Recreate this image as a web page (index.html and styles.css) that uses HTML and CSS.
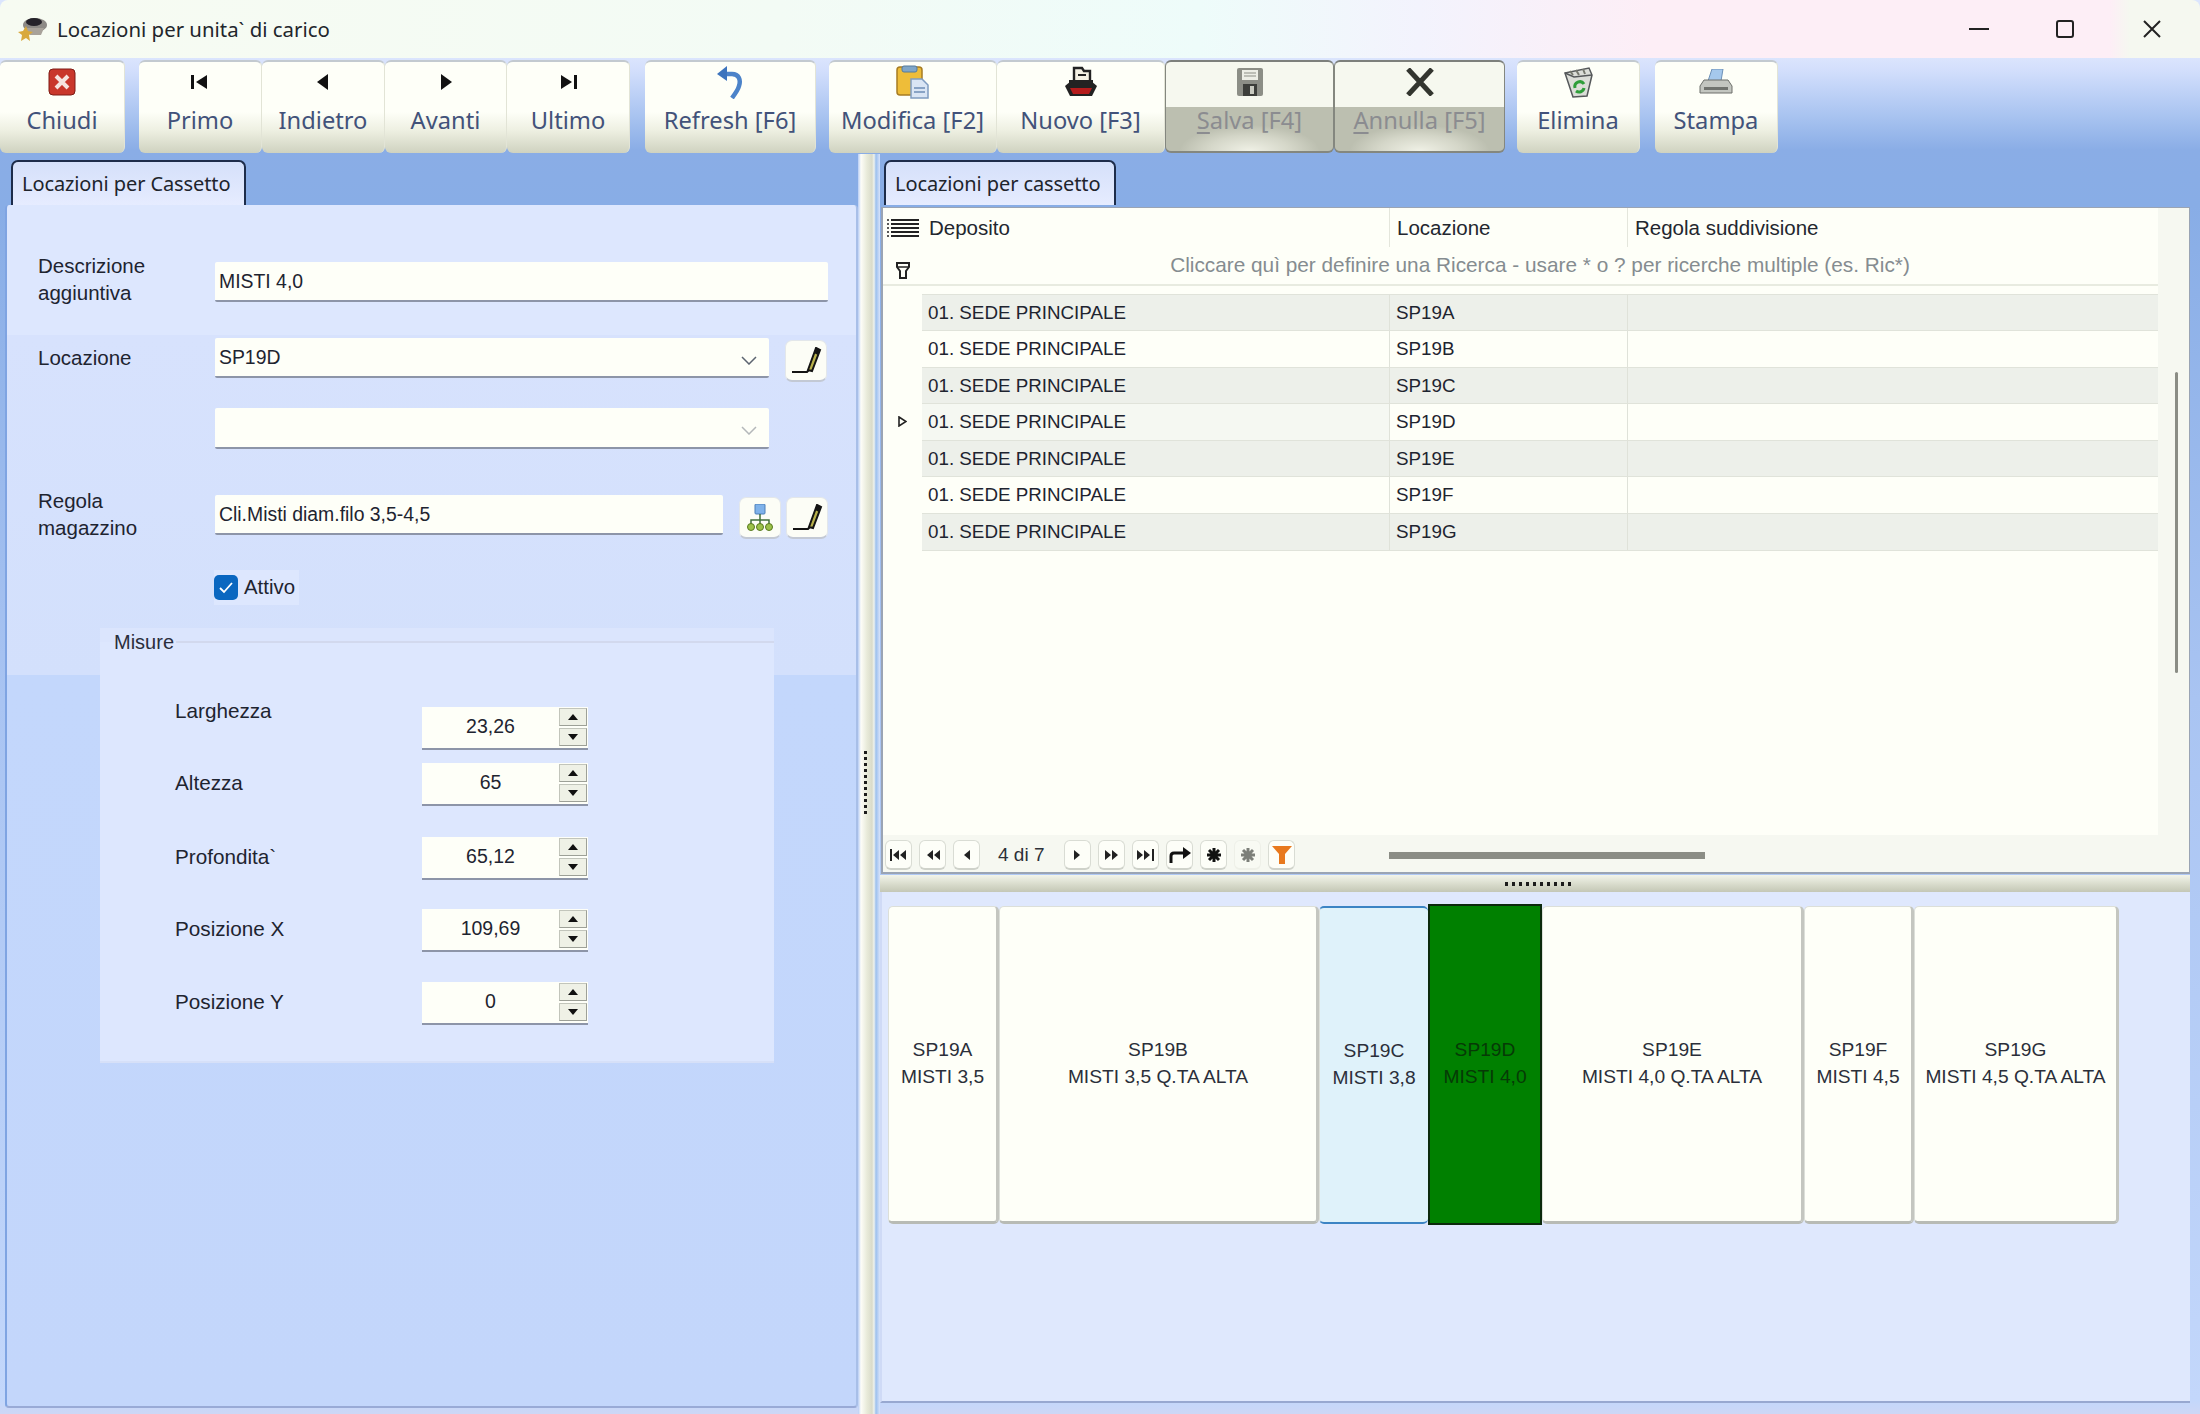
FILE: index.html
```html
<!DOCTYPE html>
<html lang="it">
<head>
  <meta charset="utf-8">
  <title>Locazioni per unita` di carico</title>
  <link rel="stylesheet" href="styles.css">
</head>
<body>
<div class="window">
  <!-- titlebar -->
  <div class="titlebar">
    <svg class="app-icon" viewBox="0 0 30 26">
      <ellipse cx="17" cy="9" rx="12" ry="7" fill="#8d8a86"/>
      <ellipse cx="16" cy="6" rx="8" ry="4" fill="#25222a"/>
      <path d="M8 12h18l-3 7H12z" fill="#a8a29a"/>
      <path d="M8 10l2 5 5 1-4 3 1 6-4-3-5 3 1-6-4-3 5-1z" fill="#d9a93c"/>
    </svg>
    <span class="app-title">Locazioni per unita` di carico</span>
    <div class="winbtns">
      <svg class="winbtn-min" viewBox="0 0 20 2"><rect width="20" height="2" fill="#222"/></svg>
      <svg class="winbtn-max" viewBox="0 0 18 18"><rect x="1" y="1" width="16" height="16" rx="2" fill="none" stroke="#222" stroke-width="2"/></svg>
      <svg class="winbtn-close" viewBox="0 0 18 18"><path d="M1 1l16 16M17 1L1 17" stroke="#222" stroke-width="2"/></svg>
    </div>
  </div>

  <!-- toolbar -->
  <div class="toolbar">
    <div class="tb-group g1">
      <button class="tb-btn w125"><span class="tb-icon">
        <svg width="28" height="28" viewBox="0 0 28 28"><rect x="1" y="1" width="26" height="26" rx="4" fill="#c9372b" stroke="#7e1d16"/><path d="M8 8l12 12M20 8L8 20" stroke="#f6e4df" stroke-width="4"/></svg>
      </span><span>Chiudi</span></button>
    </div>
    <div class="tb-group g2">
      <button class="tb-btn w123"><span class="tb-icon"><svg width="20" height="14" viewBox="0 0 20 14"><rect x="1" y="0" width="3" height="14" fill="#111"/><path d="M17 0v14L6 7z" fill="#111"/></svg></span><span>Primo</span></button>
      <button class="tb-btn w123"><span class="tb-icon"><svg width="14" height="16" viewBox="0 0 14 16"><path d="M12 0v16L1 8z" fill="#111"/></svg></span><span>Indietro</span></button>
      <button class="tb-btn w122"><span class="tb-icon"><svg width="14" height="16" viewBox="0 0 14 16"><path d="M2 0v16l11-8z" fill="#111"/></svg></span><span>Avanti</span></button>
      <button class="tb-btn w123"><span class="tb-icon"><svg width="20" height="14" viewBox="0 0 20 14"><rect x="16" y="0" width="3" height="14" fill="#111"/><path d="M3 0v14l11-7z" fill="#111"/></svg></span><span>Ultimo</span></button>
    </div>
    <div class="tb-group g3">
      <button class="tb-btn w171"><span class="tb-icon">
        <svg width="30" height="34" viewBox="0 0 30 34"><path d="M8 9h9c7 0 9 6 7 12-1 4-4 8-7 12" fill="none" stroke="#4c83c9" stroke-width="4.5"/><path d="M12 1L2 9l10 7z" fill="#3d74bd"/></svg>
      </span><span>Refresh [F6]</span></button>
    </div>
    <div class="tb-group g4">
      <button class="tb-btn w168"><span class="tb-icon">
        <svg width="34" height="34" viewBox="0 0 34 34"><rect x="1" y="2" width="25" height="28" rx="3" fill="#eebd39" stroke="#a77c22" stroke-width="1.5"/><rect x="6" y="1" width="15" height="6" rx="2" fill="#7fa6c8" stroke="#557a9c"/><path d="M15 14h11l6 6v13H15z" fill="#d9e5f4" stroke="#7f9cc0" stroke-width="1.5"/><path d="M18 23h11M18 27h11" stroke="#6d8db5" stroke-width="1.5"/></svg>
      </span><span>Modifica [F2]</span></button>
      <button class="tb-btn w168"><span class="tb-icon">
        <svg width="34" height="32" viewBox="0 0 34 32"><path d="M10 2h8l2 3h6v15H10z" fill="#f4f1e4" stroke="#222" stroke-width="2.4"/><path d="M14 9h8" stroke="#222" stroke-width="2"/><path d="M6 15h22v5H6z" fill="#fff" stroke="#222" stroke-width="2"/><path d="M1 20l6-5h20l6 5-5 10H6z" fill="#222"/><path d="M6 22h22l-3 6H9z" fill="#b51c1c"/></svg>
      </span><span>Nuovo [F3]</span></button>
      <button class="tb-btn w169 off"><span class="tb-icon">
        <svg width="26" height="28" viewBox="0 0 26 28"><rect x="0" y="0" width="26" height="28" rx="2" fill="#8c8e86"/><rect x="5" y="2" width="16" height="10" fill="#eceee6"/><path d="M7 5h12M7 8h12" stroke="#8c8e86"/><rect x="6" y="16" width="14" height="12" fill="#3c3e3a"/><rect x="13" y="18" width="4" height="8" fill="#c8cac0"/></svg>
      </span><span><u>S</u>alva [F4]</span></button>
      <button class="tb-btn w171 off"><span class="tb-icon">
        <svg width="30" height="28" viewBox="0 0 30 28"><path d="M3 1l24 26M27 1L3 27" stroke="#33352f" stroke-width="5"/></svg>
      </span><span><u>A</u>nnulla [F5]</span></button>
    </div>
    <div class="tb-group g5">
      <button class="tb-btn w123"><span class="tb-icon">
        <svg width="32" height="32" viewBox="0 0 32 32"><path d="M3 7l24-5 3 7-5 21-14 1z" fill="#dcded8" stroke="#55585a" stroke-width="1.5"/><path d="M3 7l9 4 18-2" fill="none" stroke="#55585a" stroke-width="1.5"/><path d="M8 5l3 4M14 4l3 5M21 3l2 5" stroke="#77796f" stroke-width="2"/><path d="M13 22a5 5 0 0 1 9-4M22 22a5 5 0 0 1-8 3" fill="none" stroke="#2f9e3a" stroke-width="3"/></svg>
      </span><span>Elimina</span></button>
    </div>
    <div class="tb-group">
      <button class="tb-btn w123"><span class="tb-icon">
        <svg width="34" height="26" viewBox="0 0 34 26"><path d="M13 0h11l-2 12H9z" fill="#a5c8ec" stroke="#6d90b8"/><path d="M5 11h24l4 6v7H1v-7z" fill="#c3c6c0" stroke="#6c6f6a"/><rect x="5" y="18" width="24" height="3" fill="#70736e"/></svg>
      </span><span>Stampa</span></button>
    </div>
  </div>

  <div class="main">
    <!-- left side -->
    <div class="col-left">
      <div class="tab tab-left">Locazioni per Cassetto</div>
      <div class="panel-left">
        <div class="frow r1">
          <label class="flabel">Descrizione<br>aggiuntiva</label>
          <div class="input w613 mt10">MISTI 4,0</div>
        </div>
        <div class="frow r2">
          <label class="flabel mt6">Locazione</label>
          <div class="input combo">SP19D
            <svg class="chev" viewBox="0 0 16 9"><path d="M1 1l7 7 7-7" fill="none" stroke="#5c6470" stroke-width="1.5"/></svg>
          </div>
          <button class="sq-btn mt2 ml16"><svg width="32" height="28" viewBox="0 0 32 28"><path d="M26 1l4 2-8 21-4-1z" fill="#b7b04a" stroke="#141414" stroke-width="2"/><path d="M26 1l4 2-2 5-4-2z" fill="#141414"/><path d="M2 25h15l2-2" fill="none" stroke="#141414" stroke-width="2"/></svg></button>
        </div>
        <div class="frow r3">
          <div class="flabel"></div>
          <div class="input combo">
            <svg class="chev light" viewBox="0 0 16 9"><path d="M1 1l7 7 7-7" fill="none" stroke="#b4b8ba" stroke-width="1.5"/></svg>
          </div>
        </div>
        <div class="frow r4">
          <label class="flabel">Regola<br>magazzino</label>
          <div class="input w508 mt8">Cli.Misti diam.filo 3,5-4,5</div>
          <button class="sq-btn mt10 ml16"><svg width="28" height="28" viewBox="0 0 28 28"><rect x="9" y="0" width="10" height="10" rx="1" fill="#7fb2ea" stroke="#4d7fb8"/><path d="M14 10v6M5 20v-4h18v4M14 16v4" fill="none" stroke="#3f6f3a" stroke-width="1.5"/><circle cx="5" cy="23" r="3.5" fill="#9cc24a" stroke="#56781e"/><circle cx="14" cy="23" r="3.5" fill="#9cc24a" stroke="#56781e"/><circle cx="23" cy="23" r="3.5" fill="#9cc24a" stroke="#56781e"/></svg></button>
          <button class="sq-btn mt10 ml5"><svg width="32" height="28" viewBox="0 0 32 28"><path d="M26 1l4 2-8 21-4-1z" fill="#b7b04a" stroke="#141414" stroke-width="2"/><path d="M26 1l4 2-2 5-4-2z" fill="#141414"/><path d="M2 25h15l2-2" fill="none" stroke="#141414" stroke-width="2"/></svg></button>
        </div>
        <div class="check-row">
          <span class="checkbox"><svg width="16" height="14" viewBox="0 0 16 14"><path d="M2 7l4 4 8-9" fill="none" stroke="#fff" stroke-width="1.8"/></svg></span>
          <span>Attivo</span>
        </div>
        <div class="group">
          <div class="group-head"><span>Misure</span></div>
          <div class="mrow first">
            <label class="mlabel">Larghezza</label>
            <div class="spin"><span class="spin-val">23,26</span><span class="spin-btns"><i class="up"></i><i class="dn"></i></span></div>
          </div>
          <div class="mrow gap13">
            <label class="mlabel">Altezza</label>
            <div class="spin"><span class="spin-val">65</span><span class="spin-btns"><i class="up"></i><i class="dn"></i></span></div>
          </div>
          <div class="mrow gap31">
            <label class="mlabel">Profondita`</label>
            <div class="spin"><span class="spin-val">65,12</span><span class="spin-btns"><i class="up"></i><i class="dn"></i></span></div>
          </div>
          <div class="mrow gap29">
            <label class="mlabel">Posizione X</label>
            <div class="spin"><span class="spin-val">109,69</span><span class="spin-btns"><i class="up"></i><i class="dn"></i></span></div>
          </div>
          <div class="mrow gap30">
            <label class="mlabel">Posizione Y</label>
            <div class="spin"><span class="spin-val">0</span><span class="spin-btns"><i class="up"></i><i class="dn"></i></span></div>
          </div>
        </div>
      </div>
    </div>

    <div class="vsplit"><span class="vdots"></span></div>

    <!-- right side -->
    <div class="col-right">
      <div class="tab tab-right">Locazioni per cassetto</div>
      <div class="grid">
        <div class="g-top">
          <div class="g-left">
            <div class="g-row g-head">
              <div class="g-gut"><svg width="32" height="18" viewBox="0 0 32 18"><path d="M0 1h2M0 5h2M0 9h2M0 13h2M0 17h2" stroke="#222" stroke-width="1.5"/><path d="M4 1h28M4 5h28M4 9h28M4 13h28M4 17h28" stroke="#222" stroke-width="2"/></svg></div>
              <div class="g-th">Deposito</div>
              <div class="g-th">Locazione</div>
              <div class="g-th">Regola suddivisione</div>
            </div>
            <div class="g-filter">
              <div class="g-gut"><svg width="14" height="17" viewBox="0 0 14 17"><path d="M1 1h12v4l-3 4v7H4V9L1 5z" fill="none" stroke="#222" stroke-width="2"/><path d="M1 5h12" stroke="#222" stroke-width="1.5"/></svg></div>
              <div class="g-hint">Cliccare quì per definire una Ricerca - usare * o ? per ricerche multiple (es. Ric*)</div>
            </div>
            <div class="g-rows">
              <div class="g-row row odd"><div class="g-gut"></div><div class="g-td">01. SEDE PRINCIPALE</div><div class="g-td">SP19A</div><div class="g-td"></div></div>
              <div class="g-row row"><div class="g-gut"></div><div class="g-td">01. SEDE PRINCIPALE</div><div class="g-td">SP19B</div><div class="g-td"></div></div>
              <div class="g-row row odd"><div class="g-gut"></div><div class="g-td">01. SEDE PRINCIPALE</div><div class="g-td">SP19C</div><div class="g-td"></div></div>
              <div class="g-row row cur"><div class="g-gut"><svg width="9" height="11" viewBox="0 0 9 11"><path d="M1 1l7 4.5L1 10z" fill="none" stroke="#222" stroke-width="1.6"/></svg></div><div class="g-td">01. SEDE PRINCIPALE</div><div class="g-td">SP19D</div><div class="g-td"></div></div>
              <div class="g-row row odd"><div class="g-gut"></div><div class="g-td">01. SEDE PRINCIPALE</div><div class="g-td">SP19E</div><div class="g-td"></div></div>
              <div class="g-row row"><div class="g-gut"></div><div class="g-td">01. SEDE PRINCIPALE</div><div class="g-td">SP19F</div><div class="g-td"></div></div>
              <div class="g-row row odd"><div class="g-gut"></div><div class="g-td">01. SEDE PRINCIPALE</div><div class="g-td">SP19G</div><div class="g-td"></div></div>
            </div>
          </div>
          <div class="g-strip"><div class="vthumb"></div></div>
        </div>
        <div class="g-nav">
          <button class="nav-btn"><svg width="18" height="12" viewBox="0 0 18 12"><rect x="0" y="0" width="2" height="12" fill="#222"/><path d="M9 1v10L3 6zM16 1v10L10 6z" fill="#222"/></svg></button>
          <button class="nav-btn"><svg width="14" height="12" viewBox="0 0 14 12"><path d="M7 1v10L1 6zM14 1v10L8 6z" fill="#222"/></svg></button>
          <button class="nav-btn"><svg width="7" height="12" viewBox="0 0 7 12"><path d="M7 1v10L1 6z" fill="#222"/></svg></button>
          <span class="nav-text">4 di 7</span>
          <button class="nav-btn"><svg width="7" height="12" viewBox="0 0 7 12"><path d="M0 1v10l6-5z" fill="#222"/></svg></button>
          <button class="nav-btn"><svg width="14" height="12" viewBox="0 0 14 12"><path d="M0 1v10l6-5zM7 1v10l6-5z" fill="#222"/></svg></button>
          <button class="nav-btn"><svg width="18" height="12" viewBox="0 0 18 12"><path d="M0 1v10l6-5zM7 1v10l6-5z" fill="#222"/><rect x="15" y="0" width="2" height="12" fill="#222"/></svg></button>
          <button class="nav-btn"><svg width="22" height="16" viewBox="0 0 22 16"><path d="M2 16V9c0-2 1-3 3-3h10" fill="none" stroke="#111" stroke-width="3"/><path d="M14 0l8 6-8 6z" fill="#111"/></svg></button>
          <button class="nav-btn"><svg width="16" height="16" viewBox="0 0 16 16"><path d="M8 1v14M1 8h14M3 3l10 10M13 3L3 13" stroke="#111" stroke-width="3"/></svg></button>
          <button class="nav-btn off"><svg width="16" height="16" viewBox="0 0 16 16"><path d="M8 1v14M1 8h14M3 3l10 10M13 3L3 13" stroke="#7c7f79" stroke-width="3"/></svg></button>
          <button class="nav-btn"><svg width="20" height="18" viewBox="0 0 20 18"><path d="M0 0h20l-7 8v10H7V8z" fill="#e8791e"/></svg></button>
          <div class="hthumb"></div>
        </div>
      </div>
      <div class="hsplit"><span class="hdots"></span></div>
      <div class="panel-cells">
        <div class="cell" style="width:111px">SP19A<br>MISTI 3,5</div>
        <div class="cell" style="width:320px">SP19B<br>MISTI 3,5 Q.TA ALTA</div>
        <div class="cell cell-prev" style="width:109px">SP19C<br>MISTI 3,8</div>
        <div class="cell cell-cur" style="width:114px">SP19D<br>MISTI 4,0</div>
        <div class="cell" style="width:262px">SP19E<br>MISTI 4,0 Q.TA ALTA</div>
        <div class="cell" style="width:110px">SP19F<br>MISTI 4,5</div>
        <div class="cell" style="width:205px">SP19G<br>MISTI 4,5 Q.TA ALTA</div>
      </div>
    </div>
  </div>
</div>
</body>
</html>
```
FILE: styles.css
```css
html, body {
  margin: 0; padding: 0;
  background: #cdd7f5;
  font-family: "Liberation Sans", Arial, sans-serif;
  color: #1e2430;
}
* { box-sizing: border-box; }
button { font: inherit; color: inherit; padding: 0; outline: none; }

.window {
  width: 2200px; height: 1414px;
  overflow: hidden;
  display: flex; flex-direction: column;
  background: linear-gradient(180deg, #dbe5fd 58px, #d3dffc 70px, #bcd0f6 95px, #a5c1ef 120px, #8aade6 150px, #88ade6 205px, #a9c4f2 700px, #c3d7fb 1400px, #cdd7f5 1414px);
}

/* titlebar */
.titlebar {
  height: 58px; flex: none;
  display: flex; align-items: center;
  padding-left: 18px;
  border-radius: 8px 8px 0 0;
  background: linear-gradient(90deg, #f7fbf2 0, #f3fbf5 780px, #eefcfa 1200px, #f3f3fd 1420px, #fdeef6 1650px, #fdeef6 2110px, #f5f8f0 2130px);
}
.app-icon { width: 30px; height: 26px; margin-right: 9px; }
.app-title {
  font-family: "Noto Sans", sans-serif;
  font-size: 20.4px;
  color: #22262c;
}
.winbtns { margin-left: auto; display: flex; align-items: center; }
.winbtn-min { width: 20px; height: 2px; margin-right: 67px; }
.winbtn-max { width: 18px; height: 18px; margin-right: 69px; }
.winbtn-close { width: 18px; height: 18px; margin-right: 39px; }

/* toolbar */
.toolbar {
  height: 96px; flex: none;
  display: flex;
  padding-top: 2px;
}
.tb-group { display: flex; height: 93px; }
.g1 { margin-right: 14px; }
.g2 { margin-right: 15px; }
.g3 { margin-right: 13px; }
.g4 { margin-right: 12px; }
.g5 { margin-right: 15px; }
.tb-btn {
  height: 93px;
  display: flex; flex-direction: column; align-items: center;
  font-family: "Noto Sans", sans-serif;
  font-size: 23.7px;
  line-height: 32px;
  color: #42527a;
  border: none;
  border-top: 2px solid #c3cad0;
  border-right: 1px solid #e2e4d6;
  border-radius: 6px;
  background: linear-gradient(180deg, #fefff8 0, #fefff8 55%, #eef0e2 75%, #cfd2c0 100%);
}
.tb-icon { height: 39px; display: flex; align-items: center; justify-content: center; margin-bottom: 3px; }
.w125 { width: 125px; }
.w123 { width: 123px; }
.w122 { width: 122px; }
.w171 { width: 171px; }
.w168 { width: 168px; }
.w169 { width: 169px; }
.tb-btn.off {
  color: #8b8c90;
  border: 1px solid #84877f;
  border-top: 2px solid #7d807c;
  border-bottom: 2px solid #84877f;
  background:
    radial-gradient(ellipse 70px 26px at 50% 100%, #f0f1e6 0, #d4d6c8 60%, transparent 100%),
    linear-gradient(180deg, #f6f8ef 0, #f6f8ef 45px, #bcbfb0 45px, #bcbfb0 100%);
}
.tb-btn.off u { text-underline-offset: 3px; }

/* main area */
.main { flex: 1; display: flex; min-height: 0; }
.col-left { width: 858px; padding-left: 5px; display: flex; flex-direction: column; padding-bottom: 6px; }
.col-right { width: 1310px; display: flex; flex-direction: column; padding-bottom: 11px; }

.tab {
  height: 45px;
  margin-top: 6px;
  display: flex; align-items: center;
  width: 235px;
  padding-left: 9px;
  font-family: "Noto Sans", sans-serif;
  font-size: 20px;
  letter-spacing: -0.1px;
  color: #20242c;
  border: 2px solid #1d2c4a;
  border-bottom: none;
  border-radius: 7px 7px 0 0;
  background: linear-gradient(180deg, #d5e0fa 0, #e6ecff 100%);
}
.tab-left { margin-left: 6px; }
.tab-right { margin-left: 4px; width: 232px; margin-bottom: 2px; }

.panel-left {
  flex: 1;
  font-size: 20.5px;
  padding-top: 47px;
  border-radius: 4px 4px 4px 4px;
  border-left: 2px solid #7fa4e2;
  border-right: 2px solid #a8bfe8;
  border-bottom: 2px solid #99aad6;
  background: linear-gradient(180deg, #dde7fe 0, #dde7fe 130px, #d7e2fd 130px, #d3e0fc 470px, #c3d7fc 470px, #c3d6fb 100%);
}
.frow { display: flex; align-items: flex-start; padding-left: 31px; line-height: 27px; }
.r2 { margin-top: 32px; }
.r3 { margin-top: 26px; }
.r4 { margin-top: 38px; }
.flabel { width: 177px; flex: none; }
.mt2 { margin-top: 2px; }
.mt6 { margin-top: 6px; }
.mt8 { margin-top: 8px; }
.mt10 { margin-top: 10px; }
.ml5 { margin-left: 5px; }
.ml16 { margin-left: 16px; }

.input {
  position: relative;
  height: 40px;
  padding-left: 4px;
  display: flex; align-items: center;
  font-size: 19.4px;
  background: #fefff8;
  border-bottom: 2px solid #8d95a8;
  border-radius: 2px;
}
.w613 { width: 613px; }
.w508 { width: 508px; }
.combo { width: 554px; }
.r3 .combo { height: 41px; }
.chev { position: absolute; right: 12px; top: 18px; width: 16px; height: 9px; }

.sq-btn {
  width: 42px; height: 42px;
  display: flex; align-items: center; justify-content: center;
  background: #fcfdf6;
  border: 1px solid #e3e7ea;
  border-bottom: 2px solid #c3c9d4;
  border-radius: 7px;
}

.check-row {
  display: flex; align-items: center; gap: 6px;
  width: fit-content;
  margin: 29px 0 0 207px;
  height: 35px;
  padding-right: 4px;
  font-size: 20.4px;
  background: #dde7fe;
}
.checkbox {
  width: 24px; height: 25px;
  display: flex; align-items: center; justify-content: center;
  background: #0a67c0;
  border-radius: 5px;
}

.group {
  width: 674px;
  height: 435px;
  margin: 23px 0 0 93px;
  border-bottom: 2px solid #d6e0f8;
  background: linear-gradient(180deg, #dbe5fd 14px, #dde7fe 14px);
  font-size: 20.7px;
}
.group-head {
  height: 28px;
  display: flex; align-items: center;
  padding-left: 14px;
  font-size: 20px;
  color: #2a2e3c;
}
.group-head::after {
  content: "";
  flex: 1; height: 2px;
  background: #d2d9ee;
}
.group-head span { padding-right: 2px; }
.mrow { display: flex; align-items: center; height: 43px; padding-left: 75px; }
.mrow.first { margin-top: 51px; }
.gap13 { margin-top: 13px; }
.gap31 { margin-top: 31px; }
.gap30 { margin-top: 30px; }
.gap29 { margin-top: 29px; }
.mlabel { width: 247px; flex: none; margin-bottom: 4px; }
.first .mlabel { align-self: flex-start; margin: -10px 0 0; line-height: 27px; }
.spin {
  width: 166px; height: 43px;
  display: flex;
  background: #fefff8;
  border-bottom: 2px solid #8d95a8;
  font-size: 19.5px;
}
.spin-val { width: 137px; text-align: center; line-height: 38px; }
.spin-btns { display: flex; flex-direction: column; gap: 2px; padding-top: 1px; }
.spin-btns i {
  display: flex; align-items: center; justify-content: center;
  width: 28px; height: 18px;
  background: #eff1e6;
  border: 1px solid #c2c5bb;
  border-right-color: #9da097;
  border-bottom-color: #9da097;
}
.up::before { content: ""; border: 5px solid transparent; border-top: 0; border-bottom: 6px solid #111; }
.dn::before { content: ""; border: 5px solid transparent; border-bottom: 0; border-top: 6px solid #111; }

/* splitters */
.vsplit {
  width: 22px;
  display: flex; align-items: center;
  padding-left: 6px;
  background: linear-gradient(90deg, #b8cdf5 0, #fdfdf8 3px, #e8ead9 9px, #d9dbca 14px, #eef2ee 16px, #9cc0ee 18px, #d8e3fb 22px);
}
.vdots {
  width: 3px; height: 66px;
  background: repeating-linear-gradient(180deg, #1c1c1c 0 3px, transparent 3px 6px);
}
.hsplit {
  height: 17px; margin-top: 1px;
  display: flex; align-items: center; justify-content: center;
  padding-left: 8px;
  background: linear-gradient(180deg, #f2f4ea 0, #d6d9c9 60%, #c4c7b6 100%);
}
.hdots {
  width: 68px; height: 4px;
  background: repeating-linear-gradient(90deg, #1c1c1c 0 3px, transparent 3px 7px);
}

/* grid */
.grid {
  height: 667px;
  display: flex; flex-direction: column;
  background: #fefff8;
  margin-left: 1px;
  border: 1px solid #9aa4b4;
  border-width: 1px 1px 2px 2px;
}
.g-top { flex: 1; display: flex; min-height: 0; }
.g-left { width: 1275px; flex: none; }
.g-strip { flex: 1; background: #f6f8f1; padding: 164px 0 0 17px; }
.vthumb { width: 3px; height: 301px; background: #8b8d85; border-radius: 2px; }
.g-row {
  display: grid;
  grid-template-columns: 39px 468px 238px 530px;
}
.g-gut { display: flex; align-items: center; justify-content: center; background: #fefff8; }
.g-head { height: 39px; font-size: 20.5px; }
.g-th { padding-left: 7px; line-height: 39px; border-right: 1px solid #e4e6dc; height: 39px; color: #23272f; }
.g-head .g-th:last-child { border-right: none; }
.g-filter { height: 39px; display: flex; border-bottom: 2px solid #e8ebe0; }
.g-filter .g-gut { width: 39px; padding-top: 10px; }
.g-hint {
  flex: 1;
  text-align: center;
  font-size: 20.8px;
  line-height: 36px;
  color: #858c90;
}
.g-rows { margin-top: 8px; }
.row { height: 36.43px; font-size: 18.8px; }
.row .g-td {
  padding-left: 6px;
  line-height: 36px;
  border-right: 1px solid #dfe2d9;
  border-top: 1px solid #e0e3da;
}
.row.odd .g-td { background: #edf0ea; }
.row.cur .g-td:nth-child(2) { background: #f5f8f2; }
.row:last-child { border-bottom: 2px solid #e0e3da; height: 38px; }
.row:last-child .g-gut { margin-bottom: -2px; }
.g-rows .row .g-td:last-child { border-right: none; }

.g-nav {
  height: 37px; flex: none;
  display: flex; align-items: center; gap: 7px;
  padding: 3px 0 0 2px;
  background: #f6f8f1;
}
.nav-btn {
  width: 27px; height: 30px;
  display: flex; align-items: center; justify-content: center;
  background: #fdfef8;
  border: 1px solid #d9dcd4;
  border-bottom: 2px solid #cfd2ca;
  border-radius: 6px;
}
.nav-btn.off { background: #f8faf3; border-color: #eef0e8; }
.nav-text { width: 70px; padding-left: 11px; font-size: 19px; color: #2c3038; }
.hthumb { width: 316px; height: 7px; margin-left: 87px; background: #8b8d85; }

/* cells panel */
.panel-cells {
  flex: 1;
  display: flex;
  padding: 12px 0 0 6px;
  background: #dfe8fd;
  border-bottom: 2px solid #98a8d0;
  border-left: 2px solid #cfdaf6;
  align-items: flex-start;
}
.cell {
  height: 318px;
  margin-top: 2px;
  display: flex; align-items: center; justify-content: center;
  text-align: center;
  font-size: 19.2px;
  line-height: 27px;
  padding-bottom: 3px;
  color: #2b2f3a;
  background: #fefff8;
  border-right: 3px solid #c4c6c0;
  border-bottom: 3px solid #b8bbb5;
  border-top: 1px solid #dcdfd9;
  border-left: 1px solid #dcdfd9;
  border-radius: 5px;
}
.cell-prev {
  background: #dff2fa;
  border-top: 2px solid #3c84c4;
  border-bottom: 2px solid #3c84c4;
  border-right: none;
}
.cell-cur {
  height: 321px;
  margin-top: 0;
  background: #008000;
  color: #063a06;
  border: 2px solid #0c2a0c;
  border-radius: 0;
}
```
